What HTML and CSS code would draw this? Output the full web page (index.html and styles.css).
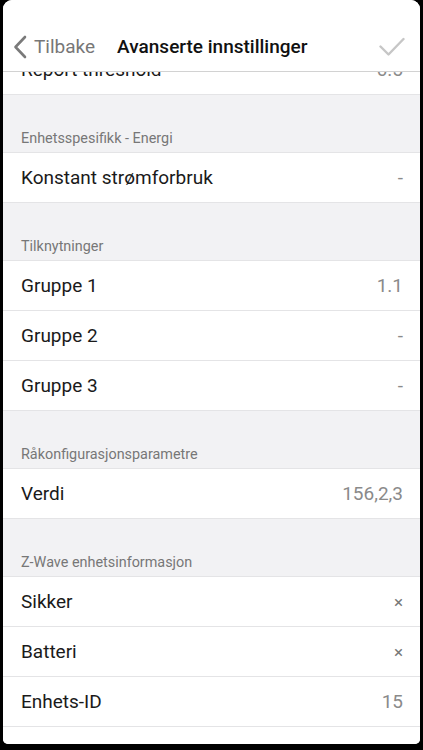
FILE: index.html
```html
<!DOCTYPE html>
<html lang="no">
<head>
<meta charset="UTF-8">
<title>Avanserte innstillinger</title>
<link rel="stylesheet" href="styles.css">
</head>
<body>
<div class="sheet">
  <div class="topbar">
    <div class="back">
      <svg class="chevron" width="14" height="24" viewBox="0 0 14 24">
        <path d="M12 2 L2.5 12 L12 22" fill="none" stroke="#7a7a7a" stroke-width="2.6" stroke-linecap="round" stroke-linejoin="round"/>
      </svg>
      <span>Tilbake</span>
    </div>
    <div class="title">Avanserte innstillinger</div>
    <svg class="check" width="26" height="20" viewBox="0 0 26 20">
      <path d="M1.5 9.5 L9.5 17.5 L24.5 2" fill="none" stroke="#c6c6c6" stroke-width="2.4" stroke-linecap="round" stroke-linejoin="round"/>
    </svg>
  </div>

  <div class="scroller">
    <div class="list">
      <div class="row"><span class="label">Report threshold</span><span class="value">0.5</span></div>

      <div class="section">Enhetsspesifikk - Energi</div>
      <div class="row"><span class="label">Konstant strømforbruk</span><span class="value">-</span></div>

      <div class="section">Tilknytninger</div>
      <div class="row"><span class="label">Gruppe 1</span><span class="value">1.1</span></div>
      <div class="row"><span class="label">Gruppe 2</span><span class="value">-</span></div>
      <div class="row"><span class="label">Gruppe 3</span><span class="value">-</span></div>

      <div class="section">Råkonfigurasjonsparametre</div>
      <div class="row"><span class="label">Verdi</span><span class="value">156,2,3</span></div>

      <div class="section">Z-Wave enhetsinformasjon</div>
      <div class="row"><span class="label">Sikker</span><span class="value small">&times;</span></div>
      <div class="row"><span class="label">Batteri</span><span class="value small">&times;</span></div>
      <div class="row"><span class="label">Enhets-ID</span><span class="value">15</span></div>
      <div class="row"><span class="label">Produsent-ID</span><span class="value">271</span></div>
    </div>
  </div>
</div>
</body>
</html>
```

FILE: styles.css
```css
html, body {
	margin: 0;
	padding: 0;
	background-color: #000;
}

body {
	font-family: Roboto, "Noto Sans", Arial, sans-serif;
	width: 423px;
	height: 750px;
	overflow: hidden;
}

.sheet {
	margin: 0 3px;
	height: 744px;
	background-color: #f2f2f4;
	border-radius: 9px 9px 5px 5px;
	overflow: hidden;
	display: flex;
	flex-direction: column;
}

.topbar {
	flex: none;
	height: 72px;
	box-sizing: border-box;
	padding: 22px 15px 0 10px;
	border-bottom: 1px solid #d2d2d2;
	background-color: #fff;
	display: flex;
	align-items: center;
	position: relative;
	z-index: 1;
}

.back {
	display: flex;
	align-items: center;
	gap: 7px;
	color: #777;
	font-size: 19px;
}

.title {
	flex: 1;
	margin-left: 22px;
	font-size: 19px;
	font-weight: 500;
	color: #111;
}

.check {
	margin-top: 1px;
}

.scroller {
	flex: 1;
	overflow: hidden;
}

.list {
	margin-top: -27px;
}

.row {
	display: flex;
	align-items: center;
	justify-content: space-between;
	height: 49px;
	padding: 0 17px 0 18px;
	background-color: #fff;
	border-bottom: 1px solid #e4e4e6;
}

.label {
	font-size: 19px;
	color: #1a1a1a;
}

.value {
	font-size: 19px;
	color: #8a8a8a;
}

.value.small {
	font-size: 17px;
	color: #777;
}

.section {
	padding: 36px 18px 5px;
	line-height: 16px;
	font-size: 14.4px;
	color: #777;
	border-bottom: 1px solid #e4e4e6;
}
```
